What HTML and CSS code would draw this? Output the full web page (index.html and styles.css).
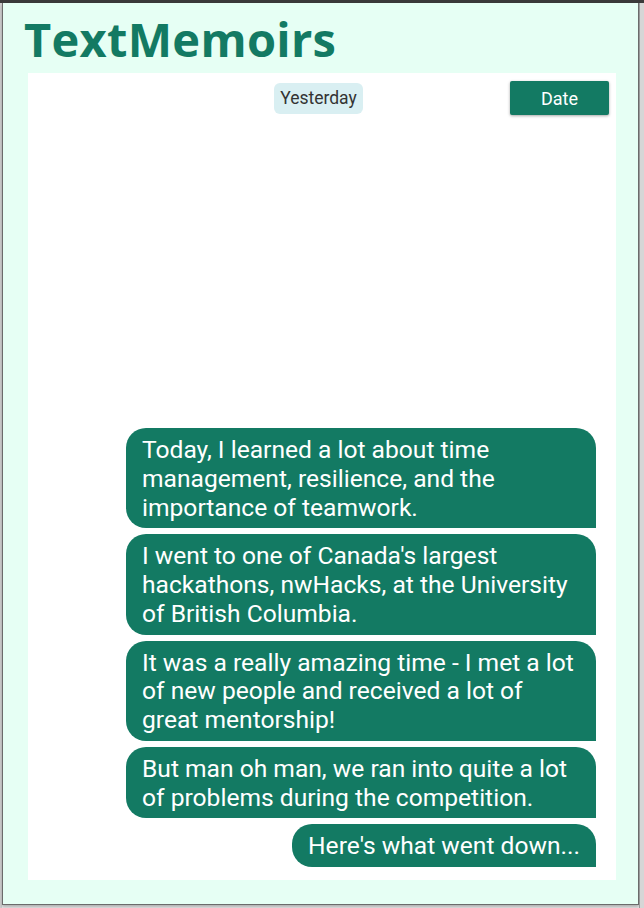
FILE: index.html
```html
<!DOCTYPE html>
<html>
<head>
<meta charset="utf-8">
<link rel="stylesheet" href="styles.css">
</head>
<body>
<div class="topbar"></div>
<div class="stage">
  <div class="backdrop-left"></div>
  <div class="popup">
    <h1 class="title">TextMemoirs</h1>
    <div class="panel">
      <div class="header">
        <span class="spacer"></span>
        <span class="chip">Yesterday</span>
        <span class="actions"><button class="date-btn">Date</button></span>
      </div>
      <div class="messages">
        <div class="bubble">Today, I learned a lot about time management, resilience, and the importance of teamwork.</div>
        <div class="bubble">I went to one of Canada's largest hackathons, nwHacks, at the University of British Columbia.</div>
        <div class="bubble">It was a really amazing time - I met a lot of new people and received a lot of great mentorship!</div>
        <div class="bubble">But man oh man, we ran into quite a lot of problems during the competition.</div>
        <div class="bubble">Here's what went down...</div>
      </div>
    </div>
  </div>
  <div class="backdrop-right"></div>
</div>
</body>
</html>
```
FILE: styles.css
```css
html, body {
  margin: 0;
  padding: 0;
}
body {
  width: 644px;
  height: 908px;
  overflow: hidden;
  background: #e9e9e9;
  font-family: Roboto, "Liberation Sans", sans-serif;
}
.topbar {
  height: 3px;
  background: #3a3a3a;
}
.stage {
  display: flex;
  height: 905px;
}
.backdrop-left {
  width: 2px;
  background: #cfcfcf;
}
.backdrop-right {
  flex: 1;
  background: #d6d6d6;
  border-left: 1px solid #9a9a9a;
}
.popup {
  width: 635px;
  height: 901px;
  background: #e6fff4;
  border-left: 1px solid #6b6b6b;
  border-right: 1px solid #6b6b6b;
  border-bottom: 1px solid #6b6b6b;
  box-shadow: 0 2px 3px rgba(0,0,0,0.25);
  display: flex;
  flex-direction: column;
}
.title {
  margin: 0;
  padding: 8px 0 0 21px;
  height: 61px;
  box-sizing: border-box;
  font-family: "Open Sans", "Noto Sans", sans-serif;
  font-weight: 700;
  font-size: 47px;
  line-height: 56px;
  color: #137a63;
  letter-spacing: 0.3px;
}
.panel {
  margin: 9px 22px 24px 25px;
  flex: 1;
  background: #ffffff;
  display: flex;
  flex-direction: column;
  min-height: 0;
}
.header {
  display: grid;
  grid-template-columns: 1fr auto 1fr;
  align-items: start;
  padding: 8px 7px 0 0;
}
.chip {
  margin-top: 2px;
  background: #d9eff2;
  color: #333;
  font-size: 17.5px;
  line-height: 31px;
  padding: 0 6px;
  border-radius: 6px;
}
.actions {
  display: flex;
  justify-content: flex-end;
}
.date-btn {
  width: 99px;
  height: 34px;
  border: none;
  border-radius: 2px;
  background: #137a63;
  color: #fff;
  font-family: Roboto, "Liberation Sans", sans-serif;
  font-size: 18px;
  box-shadow: 0 1px 3px rgba(0,0,0,0.35);
}
.messages {
  flex: 1;
  display: flex;
  flex-direction: column;
  justify-content: flex-end;
  align-items: flex-end;
  gap: 6px;
  padding: 0 20px 13px 0;
}
.bubble {
  max-width: 438px;
  background: #137a63;
  color: #fff;
  font-size: 24.6px;
  line-height: 28.75px;
  padding: 8px 16px 6px 16px;
  border-radius: 20px 20px 0 20px;
}
```
